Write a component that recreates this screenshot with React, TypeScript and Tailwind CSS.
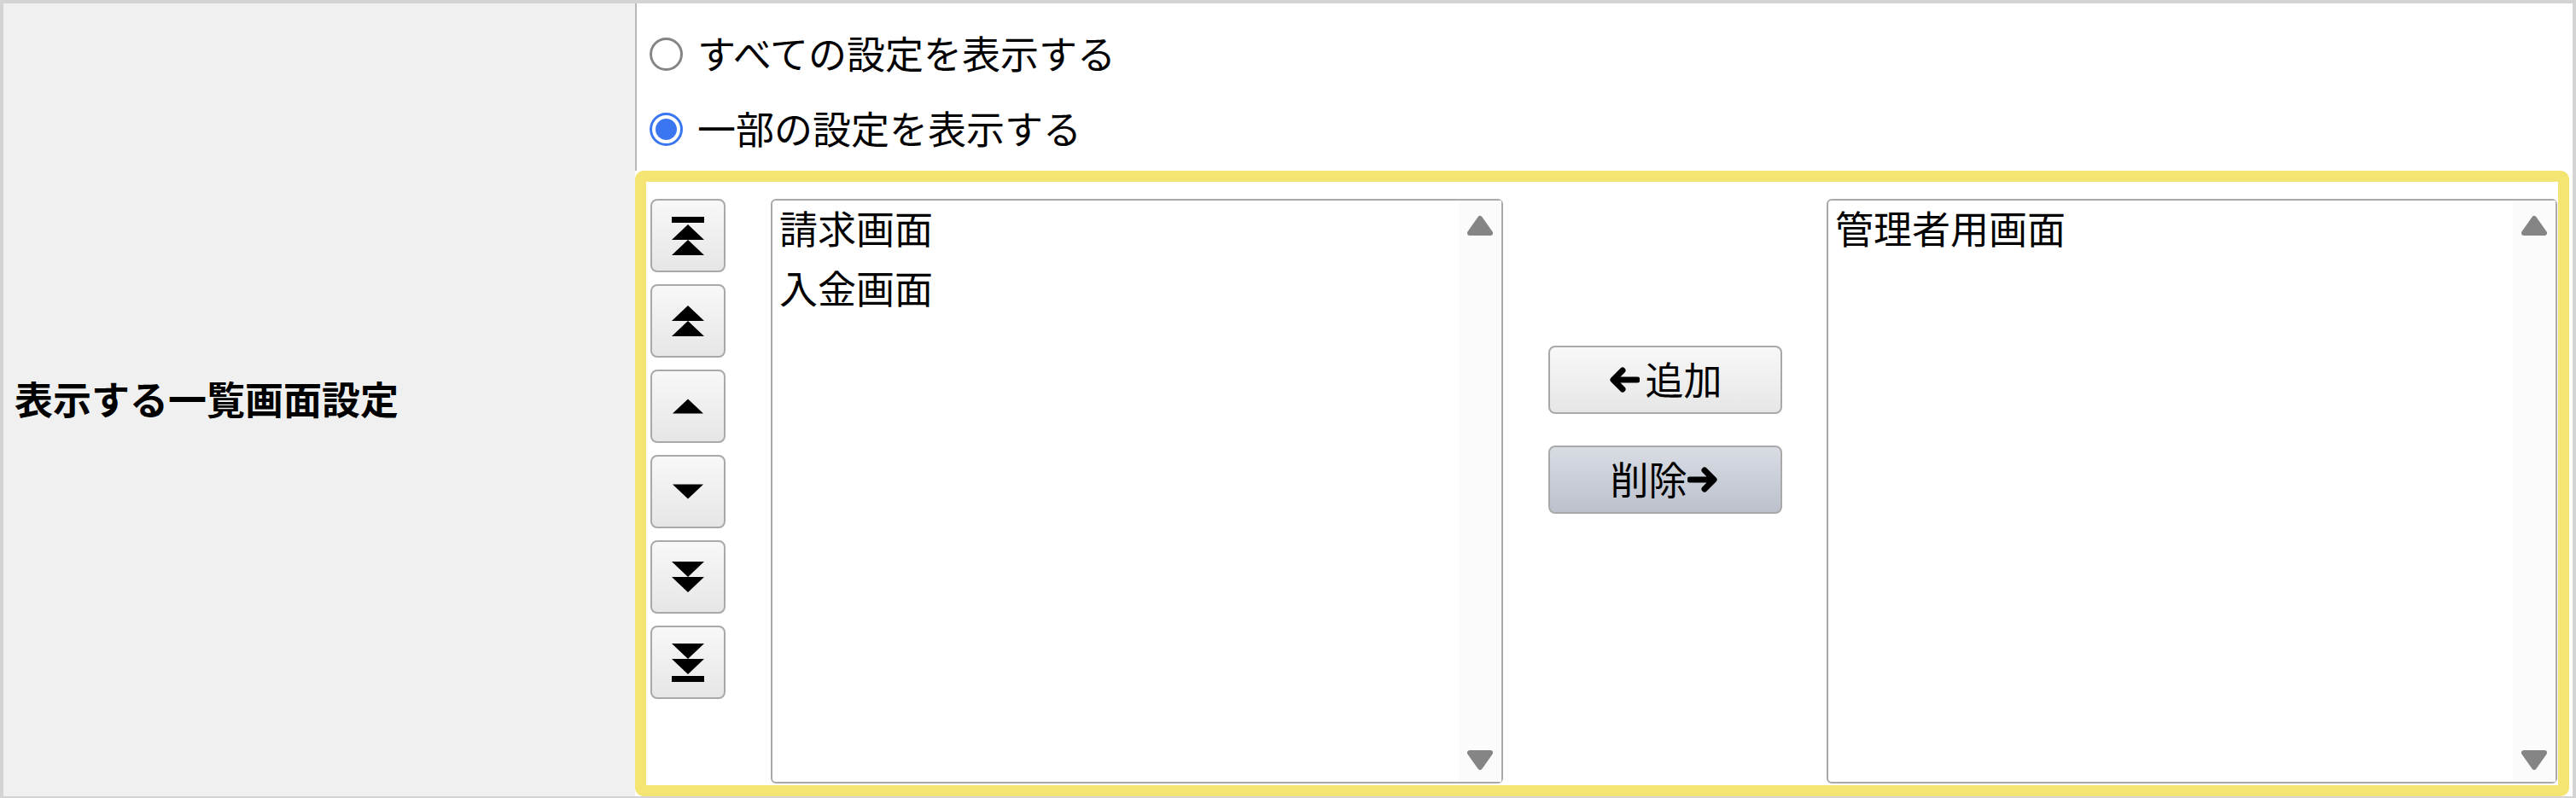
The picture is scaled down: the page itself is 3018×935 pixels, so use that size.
import React from "react";

// small filled triangles used by the order buttons
function UpTri({ y }: { y: number }) {
  return <polygon points={`19,${y} 38,${y + 18} 0,${y + 18}`} fill="#000" />;
}
function DownTri({ y }: { y: number }) {
  return <polygon points={`0,${y} 38,${y} 19,${y + 18}`} fill="#000" />;
}

function OrderIcon({ kind }: { kind: string }) {
  if (kind === "top")
    return (
      <svg width="38" height="45" viewBox="0 0 38 45">
        <rect x="0" y="0" width="38" height="7" fill="#000" />
        <UpTri y={9} />
        <UpTri y={27} />
      </svg>
    );
  if (kind === "upup")
    return (
      <svg width="38" height="38" viewBox="0 0 38 38">
        <UpTri y={1} />
        <UpTri y={19} />
      </svg>
    );
  if (kind === "up")
    return (
      <svg width="36" height="19" viewBox="0 0 38 19">
        <UpTri y={0} />
      </svg>
    );
  if (kind === "down")
    return (
      <svg width="36" height="19" viewBox="0 0 38 19">
        <DownTri y={0} />
      </svg>
    );
  if (kind === "downdown")
    return (
      <svg width="38" height="38" viewBox="0 0 38 38">
        <DownTri y={1} />
        <DownTri y={19} />
      </svg>
    );
  return (
    <svg width="38" height="45" viewBox="0 0 38 45">
      <DownTri y={0} />
      <DownTri y={18} />
      <rect x="0" y="38" width="38" height="7" fill="#000" />
    </svg>
  );
}

function Arrow({ dir }: { dir: "left" | "right" }) {
  return (
    <svg width="38" height="32" viewBox="0 0 38 32" className={dir === "right" ? "-scale-x-100" : ""}>
      <path
        d="M35 16H9M18 5L7 16L18 27"
        fill="none"
        stroke="#000"
        strokeWidth="7"
        strokeLinecap="round"
        strokeLinejoin="round"
      />
    </svg>
  );
}

function ScrollArrow({ down }: { down?: boolean }) {
  return (
    <svg width="32" height="25" viewBox="0 0 32 25" className={down ? "rotate-180" : ""}>
      <polygon
        points="16,4 28,21 4,21"
        fill="#858585"
        stroke="#858585"
        strokeWidth="6"
        strokeLinejoin="round"
      />
    </svg>
  );
}

function ListBox({ items, className }: { items: string[]; className: string }) {
  return (
    <div className={`flex border-2 border-[#a9a9a9] rounded-[6px] bg-white ${className}`}>
      <div className="flex-1 flex flex-col pl-[8px]">
        {items.map((t) => (
          <div key={t} className="h-[70px] leading-[64px] whitespace-nowrap">
            {t}
          </div>
        ))}
      </div>
      <div className="w-[50px] bg-[#fbfbfb] flex flex-col justify-between items-center pt-[17px] pb-[13px]">
        <ScrollArrow />
        <ScrollArrow down />
      </div>
    </div>
  );
}

function Radio({ checked, label }: { checked?: boolean; label: string }) {
  return (
    <div className="h-[88px] flex items-center">
      {checked ? (
        <span className="w-[39px] h-[39px] rounded-full border-[3px] border-[#3a76f0] flex items-center justify-center ml-[15px] mr-[17px]">
          <span className="w-[25px] h-[25px] rounded-full bg-[#3a76f0]" />
        </span>
      ) : (
        <span className="w-[39px] h-[39px] rounded-full border-[3px] border-[#858585] bg-white ml-[15px] mr-[17px]" />
      )}
      <span className="-mt-[3px]">{label}</span>
    </div>
  );
}

export default function App() {
  const orders = ["top", "upup", "up", "down", "downdown", "bottom"];

  return (
    <div
      className="w-[3018px] h-[935px] border-4 border-b-2 border-[#d4d4d4] flex bg-white text-[45px] text-black"
      style={{ fontFamily: '"Noto Sans CJK JP", "Noto Sans", sans-serif' }}
    >
      <div className="w-[740px] bg-[#f0f0f0] flex items-center pl-[13px]">
        <span className="font-bold -mt-[4px]">表示する一覧画面設定</span>
      </div>

      <div className="flex-1 flex flex-col">
        <div className="border-l-2 border-[#b9b9b9] pt-[15px] pb-[5px]">
          <Radio label="すべての設定を表示する" />
          <Radio checked label="一部の設定を表示する" />
        </div>

        <div className="flex-1 flex border-[13px] border-[#f4e472] rounded-[10px] mr-[4px] pt-[20px] pb-[2px] pl-[5px] pr-[1px] bg-white">
          <div className="w-[88px] flex flex-col gap-[14px]">
            {orders.map((o) => (
              <button
                key={o}
                className="h-[86px] w-[88px] border-2 border-[#a9a9a9] rounded-[8px] bg-linear-to-b from-[#f8f8f8] to-[#e6e6e6] flex items-center justify-center"
              >
                <OrderIcon kind={o} />
              </button>
            ))}
          </div>

          <ListBox items={["請求画面", "入金画面"]} className="ml-[53px] w-[858px]" />

          <div className="w-[379px] flex flex-col items-center pt-[172px] gap-[37px]">
            <button className="w-[274px] h-[80px] border-2 border-[#a9a9a9] rounded-[8px] bg-linear-to-b from-[#f8f8f8] to-[#e6e6e6] flex items-center justify-center gap-[6px]">
              <Arrow dir="left" />
              <span className="-mt-[3px]">追加</span>
            </button>
            <button className="w-[274px] h-[80px] border-2 border-[#a9a9a9] rounded-[8px] bg-linear-to-b from-[#d9dce3] to-[#bcc1cc] flex items-center justify-center">
              <span className="-mt-[3px]">削除</span>
              <Arrow dir="right" />
            </button>
          </div>

          <ListBox items={["管理者用画面"]} className="flex-1" />
        </div>
      </div>
    </div>
  );
}
